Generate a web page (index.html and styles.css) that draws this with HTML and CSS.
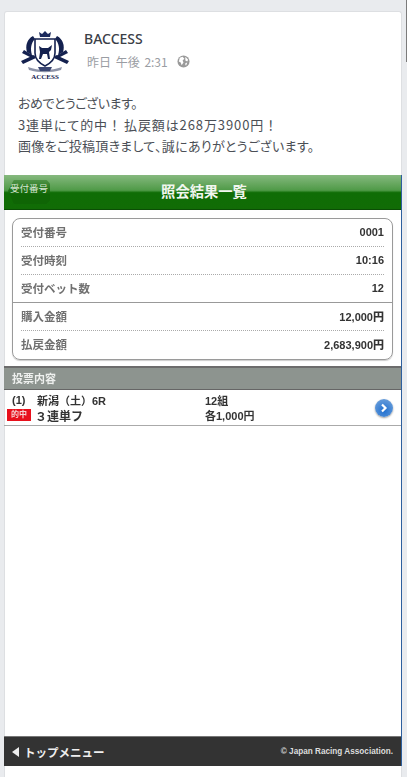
FILE: index.html
```html
<!DOCTYPE html>
<html lang="ja">
<head>
    <meta charset="UTF-8">
    <meta name="viewport" content="width=device-width, initial-scale=1.0">
    <title>BACCESS</title>
    <link rel="stylesheet" href="styles.css">
</head>
<body>
    <div class="scroll-mark"></div>
    <div class="card">
        <div class="post-head">
            <svg class="logo" viewBox="0 0 52 52" width="52" height="52">
                <path d="M26 2l-3 3-3-2 1 5h10l1-5-3 2z" fill="#1b2a5c"/>
                <path d="M14 7c-6 3-8 10-6 16l5 3c-2-6-1-12 3-16zM38 7c6 3 8 10 6 16l-5 3c2-6 1-12-3-16z" fill="#14214f"/>
                <path d="M16 10h20v14c0 6-4 10-10 13-6-3-10-7-10-13z" fill="#fff" stroke="#14214f" stroke-width="1.6"/>
                <path d="M20 17l3 2h6l4-3-1 5-2 2 1 7h-2l-1-5h-4l-2 5h-2l1-7z" fill="#14214f"/>
                <path d="M2 32l13-6 2 3-13 6zM50 32l-13-6-2 3 13 6zM5 21l10 6-2 2-10-5zM47 21l-10 6 2 2 10-5z" fill="#14214f"/>
                <path d="M9 38c11 4 23 4 34 0l-1 3c-10 3-22 3-32 0z" fill="#8d93a8"/>
                <path d="M19 38h14l-2 4H21z" fill="#3b4672"/>
                <text x="26" y="50" text-anchor="middle" class="logo-text">ACCESS</text>
            </svg>
            <div class="post-meta">
                <div class="post-name">BACCESS</div>
                <div class="post-time">
                    <span>昨日 午後 2:31</span>
                    <svg class="globe" viewBox="0 0 14 14" width="13" height="13">
                        <circle cx="7" cy="7" r="6.5" fill="#9a9a9a"/>
                        <path d="M3 3l3-1 2 2-2 2 1 2-2 3-1-3-2-1zM9 2l3 3-1 2-2-1zM9 9l2-1-1 3-1 0z" fill="#fff"/>
                    </svg>
                </div>
            </div>
        </div>
        <div class="post-text">
            <p class="tight">おめでとうございます。</p>
            <p class="wide">3連単にて的中<span class="bang">！</span>払戻額は268万3900円<span class="bang">！</span></p>
            <p>画像をご投稿頂きまして、誠にありがとうございます。</p>
        </div>

        <div class="shot">
            <div class="shot-bar">
                <div class="back-btn">受付番号</div>
                <div class="shot-title">照会結果一覧</div>
            </div>
            <div class="result-box">
                <div class="result-row"><span>受付番号</span><b>0001</b></div>
                <div class="result-row"><span>受付時刻</span><b>10:16</b></div>
                <div class="result-row solid"><span>受付ベット数</span><b>12</b></div>
                <div class="result-row"><span>購入金額</span><b>12,000円</b></div>
                <div class="result-row last"><span>払戻金額</span><b>2,683,900円</b></div>
            </div>
            <div class="section-bar">投票内容</div>
            <div class="bet-row">
                <div class="bet-info">
                    <div class="bet-line">
                        <span class="bet-no">(1)</span>
                        <span class="bet-place">新潟（土）6R</span>
                        <span class="bet-count">12組</span>
                    </div>
                    <div class="bet-line">
                        <span class="hit">的中</span>
                        <span class="bet-place type">３連単フ</span>
                        <span class="bet-count">各1,000円</span>
                    </div>
                </div>
                <div class="go-btn">
                    <svg viewBox="0 0 10 10" width="10" height="10"><path d="M3 1.5L6.5 5 3 8.5" fill="none" stroke="#fff" stroke-width="2.2"/></svg>
                </div>
            </div>
            <div class="shot-space"></div>
            <div class="shot-foot">
                <div class="top-menu"><i class="arrow"></i>トップメニュー</div>
                <div class="copy">© Japan Racing Association.</div>
            </div>
        </div>
        <div class="card-rest"></div>
    </div>
</body>
</html>
```

FILE: styles.css
```css
html, body {
    height: 777px;
    overflow: hidden;
}

body {
    margin: 0;
    padding: 11px 5px 0 4px;
    box-sizing: border-box;
    background-color: #e9ebee;
    font-family: "Noto Sans CJK JP", "Noto Sans", sans-serif;
}

.scroll-mark {
    position: absolute;
    top: 0;
    right: 0;
    width: 1px;
    height: 62px;
    background-color: #7b7b7b;
}

.card {
    background-color: #fff;
    border: 1px solid #dddfe2;
    border-bottom: none;
    border-radius: 3px 3px 0 0;
}

/* Post header */
.post-head {
    display: flex;
    gap: 13px;
    padding: 17px 0 0 14px;
}

.logo {
    display: block;
    flex: none;
}

.logo-text {
    font-family: "Liberation Serif", serif;
    font-size: 7px;
    font-weight: bold;
    fill: #14214f;
}

.post-name {
    font-family: "Noto Sans", sans-serif;
    font-size: 14px;
    font-weight: 500;
    line-height: 20px;
    color: #3b4048;
}

.post-time {
    display: flex;
    align-items: center;
    gap: 9px;
    margin-top: 4px;
    padding-left: 3px;
    font-size: 12px;
    line-height: 17px;
    word-spacing: 2px;
    color: #9a9da3;
}

.globe {
    display: block;
}

.post-text {
    padding: 11px 0 0 13px;
    height: 94px;
    box-sizing: border-box;
    font-size: 13px;
    line-height: 21.5px;
    letter-spacing: 0.3px;
    font-feature-settings: "palt";
    color: #4b4f56;
}

.post-text p {
    margin: 0;
}

.post-text .tight {
    letter-spacing: -0.5px;
}

.post-text .wide {
    letter-spacing: 0.9px;
}

.bang {
    font-feature-settings: normal;
    letter-spacing: 3px;
}

/* Screenshot pasted in the post */
.shot {
    height: 591px;
    margin: 0 -1px;
    display: flex;
    flex-direction: column;
    border-right: 1px solid #2d5f9e;
    font-family: "Liberation Sans", "Noto Sans CJK JP", sans-serif;
    filter: blur(0.45px);
}

.shot-bar {
    height: 35px;
    flex: none;
    position: relative;
    display: flex;
    justify-content: center;
    align-items: center;
    padding-bottom: 4px;
    background: linear-gradient(#86b97f 0, #4f9a47 45%, #0f6d05 52%, #116c06 100%);
    border-bottom: 1px solid #0b4d05;
    box-sizing: border-box;
}

.back-btn {
    position: absolute;
    left: 4px;
    top: 5px;
    width: 42px;
    height: 24px;
    box-sizing: border-box;
    padding: 1px 0 0 2px;
    font-size: 9.5px;
    line-height: 16px;
    color: #d6e6d2;
    background: linear-gradient(#4f9347, #0f6505 60%);
    clip-path: polygon(0 45%, 14% 0, 92% 0, 100% 15%, 100% 85%, 92% 100%, 14% 100%);
    white-space: nowrap;
}

.shot-title {
    font-size: 14.3px;
    font-weight: bold;
    color: #f2f6ef;
    margin-left: 3px;
}

.result-box {
    flex: none;
    margin: 8px 8px 0 8px;
    border: 1px solid #9a9a9a;
    border-radius: 8px;
    padding: 0 8px;
    box-shadow: 0 1px 1px #ccc;
}

.result-row {
    height: 28px;
    box-sizing: border-box;
    padding-bottom: 2px;
    display: flex;
    justify-content: space-between;
    align-items: center;
    border-bottom: 1px dotted #aaa;
    font-size: 11.5px;
    font-weight: bold;
    color: #707070;
}

.result-row b {
    font-size: 11px;
    color: #333;
}

.result-row.solid {
    border-bottom: 1px solid #999;
    margin: 0 -8px;
    padding: 0 8px 2px;
}

.result-row.last {
    border-bottom: none;
}

.section-bar {
    flex: none;
    margin-top: 6px;
    height: 24px;
    box-sizing: border-box;
    padding: 2px 0 0 8px;
    background: #8d948f;
    border-top: 2px solid #6c6c6c;
    border-bottom: 1px solid #666;
    font-size: 11px;
    font-weight: bold;
    line-height: 18px;
    color: #eef0ee;
}

.bet-row {
    flex: none;
    height: 36px;
    box-sizing: border-box;
    display: flex;
    align-items: center;
    justify-content: space-between;
    padding: 0 8px 0 0;
    border-bottom: 1px solid #aaa;
}

.bet-line {
    display: flex;
    align-items: center;
    height: 15px;
    font-size: 11px;
    font-weight: bold;
    color: #333;
}

.bet-no {
    width: 33px;
    padding-left: 8px;
    box-sizing: border-box;
}

.bet-place {
    width: 168px;
}

.bet-place.type {
    font-size: 12px;
    width: 174px;
    padding-left: 4px;
    box-sizing: border-box;
}

.hit {
    width: 24px;
    height: 12px;
    margin: 0 0 0 3px;
    background-color: #e8101c;
    font-size: 8px;
    line-height: 12px;
    text-align: center;
    color: #f5d0d0;
}

.go-btn {
    width: 18px;
    height: 18px;
    border-radius: 50%;
    display: flex;
    align-items: center;
    justify-content: center;
    background: radial-gradient(circle at 50% 65%, #1f6fd0, #7aa8dc);
    box-shadow: 0 1px 2px #999;
}

.shot-space {
    flex: 1;
}

.shot-foot {
    flex: none;
    height: 30px;
    box-sizing: border-box;
    display: flex;
    align-items: center;
    justify-content: space-between;
    padding: 0 8px;
    background-color: #333;
    border-top: 1px solid #777;
    color: #eee;
}

.top-menu {
    display: flex;
    align-items: center;
    font-size: 11.5px;
    font-weight: bold;
}

.arrow {
    width: 0;
    height: 0;
    margin-right: 5px;
    border-top: 5px solid transparent;
    border-bottom: 5px solid transparent;
    border-right: 7px solid #eee;
}

.copy {
    font-size: 8.2px;
    font-weight: bold;
    color: #ddd;
}

.card-rest {
    height: 20px;
}
```
